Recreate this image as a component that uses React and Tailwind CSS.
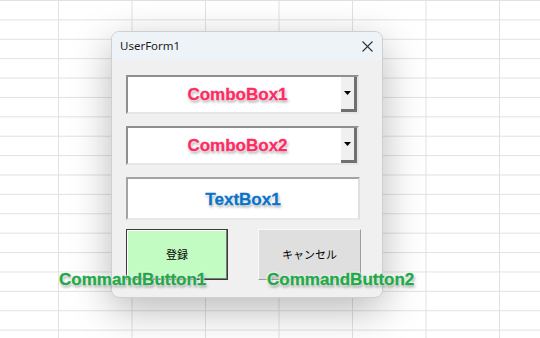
const label = "font-['Liberation_Sans',Arial,sans-serif] font-bold text-[17px] leading-[20px] [-webkit-text-stroke:0.35px_currentColor] [text-shadow:0_0_2px_#fff,0_0_2px_#fff,0_0_3px_#fff,1px_2px_3px_rgba(0,0,0,0.45)]";

function ComboBox({ text }) {
  return (
    <div className="flex h-[39px] w-[233px] border-2 border-t-[#8f8f8f] border-l-[#8f8f8f] border-b-[#e6e6e6] border-r-[#e6e6e6] bg-white">
      <div className={`flex-1 flex items-center justify-center pl-[6px] text-[#fb2c64] ${label}`}>{text}</div>
      <div className="w-[16px] flex items-center justify-center bg-[#f0f0f0] border-r-[3px] border-b-[3px] border-[#707070]">
        <svg width="8" height="5" viewBox="0 0 8 5">
          <path d="M0 0h7L3.5 4z" fill="#000" />
        </svg>
      </div>
    </div>
  );
}

export default function App() {
  return (
    <div className="relative w-[540px] h-[338px] overflow-hidden bg-white bg-[linear-gradient(to_right,#e1e1e1_1px,transparent_1px),linear-gradient(to_bottom,#e1e1e1_1px,transparent_1px)] bg-size-[73.5px_19.4px] bg-position-[58px_0px]">
      <div className="absolute left-[111px] top-[31px] w-[272px] h-[267px] flex flex-col rounded-[8px] overflow-hidden border border-[#cfcfcf] bg-[#f0f0f0] shadow-[0_12px_40px_rgba(0,0,0,0.28)]">
        <div className="h-[28px] shrink-0 flex items-center justify-between pl-[8px] pr-[9px] bg-[#eef3f8] font-['Noto_Sans',sans-serif] text-[11.5px] text-[#1b1b1b]">
          <span>UserForm1</span>
          <svg width="11" height="11" viewBox="0 0 11 11">
            <path d="M0.5 0.5l10 10M10.5 0.5l-10 10" stroke="#333" strokeWidth="1.1" />
          </svg>
        </div>
        <div className="flex flex-col pt-[15px] px-[14px] gap-[12px]">
          <ComboBox text="ComboBox1" />
          <ComboBox text="ComboBox2" />
          <div className={`h-[43px] w-[234px] pt-[2px] flex items-center justify-center bg-white border-2 border-t-[#a3a3a3] border-l-[#a3a3a3] border-b-[#e9e9e9] border-r-[#e0e0e0] text-[#0a73c6] ${label}`}>
            TextBox1
          </div>
          <div className="flex gap-[30px] -mt-[3px] font-['Noto_Sans_CJK_JP',sans-serif] text-[11px] text-black">
            <div className="w-[102px] h-[51px] flex items-center justify-center bg-[#c2fcc2] border border-[#3a3a3a] shadow-[inset_-1px_-1px_0_#7a7a7a,inset_1px_1px_0_#ffffff]">
              登録
            </div>
            <div className="w-[103px] h-[51px] flex items-center justify-center bg-[#dfdfdf] border border-t-[#fafafa] border-l-[#fafafa] border-b-[#9c9c9c] border-r-[#9c9c9c]">
              キャンセル
            </div>
          </div>
        </div>
      </div>
      <div className={`absolute left-[59px] top-[270px] text-[#22a847] ${label}`}>CommandButton1</div>
      <div className={`absolute left-[267px] top-[270px] text-[#22a847] ${label}`}>CommandButton2</div>
    </div>
  );
}
